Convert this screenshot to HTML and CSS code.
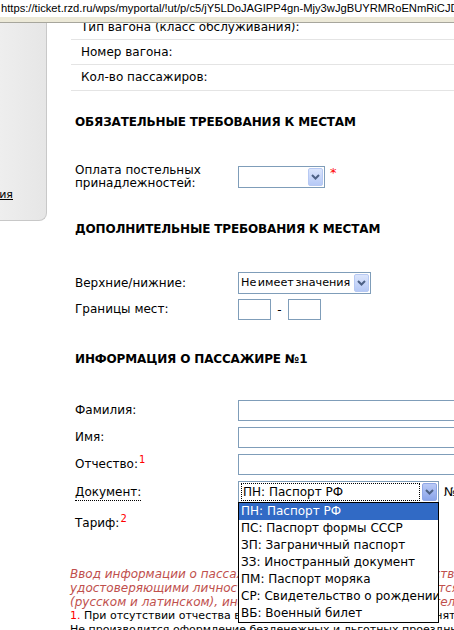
FILE: index.html
```html
<!DOCTYPE html>
<html lang="ru">
<head>
<meta charset="utf-8">
<title>Информация о пассажире</title>
<link rel="stylesheet" href="styles.css">
</head>
<body>
<div class="urlbar">https://ticket.rzd.ru/wps/myportal/!ut/p/c5/jY5LDoJAGIPP4gn-Mjy3wJgBUYRMRoENmRiCJDxcZXNhUlGwKJJmUg</div>
<div class="strip"></div>
<div class="page">
  <aside class="sidebar">
    <div class="side-bottom"><a href="#" class="side-link">Информация</a></div>
  </aside>
  <main class="content">
    <div class="info-table">
      <div class="info-row">Тип вагона (класс обслуживания):</div>
      <div class="info-row">Номер вагона:</div>
      <div class="info-row last">Кол-во пассажиров:</div>
    </div>

    <h2 class="section-title t1">ОБЯЗАТЕЛЬНЫЕ ТРЕБОВАНИЯ К МЕСТАМ</h2>
    <div class="form-grid g1">
      <div class="label">Оплата постельных<br>принадлежностей:</div>
      <div class="field">
        <div class="select sel-bedding">
          <span class="sel-text"></span>
          <span class="sel-btn"><svg width="9" height="6" viewBox="0 0 9 6"><path d="M1 1 L4.5 4.5 L8 1" fill="none" stroke="#4d6185" stroke-width="2"/></svg></span>
        </div>
        <span class="req">*</span>
      </div>
    </div>

    <h2 class="section-title t2">ДОПОЛНИТЕЛЬНЫЕ ТРЕБОВАНИЯ К МЕСТАМ</h2>
    <div class="form-grid g2">
      <div class="label">Верхние/нижние:</div>
      <div class="field">
        <div class="select sel-berth">
          <span class="sel-text narrow">Не имеет значения</span>
          <span class="sel-btn"><svg width="9" height="6" viewBox="0 0 9 6"><path d="M1 1 L4.5 4.5 L8 1" fill="none" stroke="#4d6185" stroke-width="2"/></svg></span>
        </div>
      </div>
      <div class="label">Границы мест:</div>
      <div class="field range">
        <span class="input small"></span>
        <span class="dash">-</span>
        <span class="input small"></span>
      </div>
    </div>

    <h2 class="section-title t3">ИНФОРМАЦИЯ О ПАССАЖИРЕ №1</h2>
    <div class="form-grid g3">
      <div class="label">Фамилия:</div>
      <div class="field"><span class="input wide"></span></div>
      <div class="label">Имя:</div>
      <div class="field"><span class="input wide"></span></div>
      <div class="label">Отчество:<sup class="mark">1</sup></div>
      <div class="field"><span class="input wide"></span></div>
      <div class="label"><span class="doc-label">Документ:</span></div>
      <div class="field">
        <div class="select sel-doc">
          <span class="sel-text"><span class="focus">ПН: Паспорт РФ</span></span>
          <span class="sel-btn hot"><svg width="9" height="6" viewBox="0 0 9 6"><path d="M1 1 L4.5 4.5 L8 1" fill="none" stroke="#4d6185" stroke-width="2"/></svg></span>
          <ul class="options">
            <li class="selected">ПН: Паспорт РФ</li>
            <li>ПС: Паспорт формы СССР</li>
            <li>ЗП: Заграничный паспорт</li>
            <li>ЗЗ: Иностранный документ</li>
            <li>ПМ: Паспорт моряка</li>
            <li>СР: Свидетельство о рождении</li>
            <li>ВБ: Военный билет</li>
          </ul>
        </div>
        <span class="num">№</span>
      </div>
      <div class="label tarif">Тариф:<sup class="mark">2</sup></div>
      <div class="field tarif"></div>
    </div>

    <p class="note">Ввод информации о пассажирах производится в соответствии с данными и<br>удостоверяющими личность документами. Данные вводятся в двух вариантах<br>(русском и латинском), информация о пассажирах обязательна для набора</p>
    <p class="footnote"><span class="fn-num">1.</span> При отсутствии отчества в документе поле можно не заполнять,<br>Не производится оформление безденежных и льготных проездных документов</p>
  </main>
</div>
</body>
</html>
```

FILE: styles.css
```css
html, body {
  margin: 0;
  padding: 0;
  overflow: hidden;
  background: #fff;
}
body {
  width: 454px;
  height: 630px;
  font-family: "DejaVu Sans", Verdana, sans-serif;
  font-size: 12px;
  color: #000;
}

.urlbar {
  height: 17px;
  line-height: 17px;
  padding-left: 1px;
  font-family: "Liberation Sans", Arial, sans-serif;
  font-size: 11.2px;
  white-space: nowrap;
  overflow: hidden;
}
.strip {
  height: 5px;
  background: #ece9d8;
  border-bottom: 1px solid #a7a69c;
}

.page {
  display: flex;
  align-items: flex-start;
  height: 607px;
  overflow: hidden;
}

.sidebar {
  flex: 0 0 46px;
  height: 197px;
  background: linear-gradient(to right, #eeeeee, #e6e6e6);
  border-right: 1px solid #c8c8c8;
  border-bottom: 1px solid #c8c8c8;
  border-bottom-right-radius: 8px;
  display: flex;
  flex-direction: column;
  justify-content: flex-end;
  overflow: hidden;
}
.side-bottom {
  display: flex;
  justify-content: flex-end;
  padding: 0 33px 19px 0;
}
.side-link {
  flex-shrink: 0;
  color: #000;
  font-size: 11px;
  white-space: nowrap;
}

.content {
  flex: 1;
  min-width: 0;
  height: 607px;
  padding-left: 24px;
  overflow: hidden;
}

.info-table {
  margin-top: -8px;
}
.info-row {
  height: 24px;
  line-height: 24px;
  padding-left: 10px;
  border-bottom: 1px solid #e4e4e4;
  white-space: nowrap;
}
.info-row.last {
  height: 25px;
}

.section-title {
  margin: 0;
  padding-left: 4px;
  font-size: 12px;
  font-weight: bold;
  line-height: 14px;
  letter-spacing: -0.15px;
  white-space: nowrap;
}
.t1 { margin-top: 24px; }
.t2 { margin-top: 32px; }
.t3 { margin-top: 32px; }

.form-grid {
  display: grid;
  grid-template-columns: 163px 1fr;
  row-gap: 5px;
  align-items: center;
  margin-left: 4px;
}
.g1 { margin-top: 35px; }
.g2 { margin-top: 36px; }
.g3 { margin-top: 34px; row-gap: 6px; }

.label {
  line-height: 13px;
  white-space: nowrap;
}
.field {
  display: flex;
  align-items: center;
  white-space: nowrap;
}

.select {
  position: relative;
  box-sizing: border-box;
  height: 22px;
  border: 1px solid #7f9db9;
  background: #fff;
  display: flex;
  align-items: stretch;
  flex-shrink: 0;
}
.sel-text {
  flex: 1;
  min-width: 0;
  padding-left: 2px;
  line-height: 20px;
  font-size: 12px;
  white-space: nowrap;
  overflow: hidden;
  display: flex;
  align-items: center;
}
.sel-text.narrow {
  font-size: 11.2px;
  word-spacing: -2px;
}
.sel-btn {
  box-sizing: border-box;
  width: 15px;
  margin: 1px;
  border: 1px solid #b7c9f3;
  border-radius: 2px;
  background: linear-gradient(to bottom, #dbe5fc, #b6c9f6);
  display: flex;
  align-items: center;
  justify-content: center;
}
.sel-btn.hot {
  border-color: #8fa7e6;
  background: linear-gradient(to bottom, #b9caf6, #8ba5ea);
}
.sel-bedding { width: 87px; }
.sel-berth { width: 133px; }
.sel-doc { width: 201px; }

.focus {
  display: block;
  flex: 1;
  height: 16px;
  line-height: 16px;
  padding-left: 1px;
  border: 1px dotted #000;
  margin-right: 1px;
}

.req {
  color: #ff0000;
  font-size: 13px;
  margin-left: 5px;
  align-self: flex-start;
  line-height: 14px;
}

.input {
  display: block;
  box-sizing: border-box;
  height: 21px;
  border: 1px solid #7f9db9;
  background: #fff;
  flex-shrink: 0;
}
.input.small { width: 33px; }
.input.wide { width: 240px; }
.dash {
  width: 17px;
  text-align: center;
}

.mark {
  color: #ff0000;
  font-size: 10px;
  line-height: 0;
  vertical-align: 5px;
  margin-left: 1px;
}

.doc-label {
  border-bottom: 1px dotted #000;
  padding-bottom: 1px;
}
.num {
  margin-left: 5px;
}

.label.tarif {
  margin-top: 4px;
  line-height: 21px;
}
.field.tarif {
  height: 21px;
  margin-top: 4px;
}

.options {
  position: absolute;
  top: 100%;
  left: -1px;
  width: 201px;
  box-sizing: border-box;
  margin: 0;
  padding: 0;
  list-style: none;
  border: 1px solid #000;
  background: #fff;
  z-index: 5;
}
.options li {
  height: 17px;
  line-height: 17px;
  padding-left: 2px;
  white-space: nowrap;
  overflow: hidden;
}
.options li.selected {
  background: #316ac5;
  color: #fff;
}

.note {
  margin: 33px 0 0 -1px;
  font-style: italic;
  color: #c0504d;
  line-height: 14px;
  white-space: nowrap;
}
.footnote {
  margin: 0 0 0 -1px;
  font-size: 11px;
  line-height: 14px;
  white-space: nowrap;
}
.fn-num {
  color: #ff0000;
}
```
